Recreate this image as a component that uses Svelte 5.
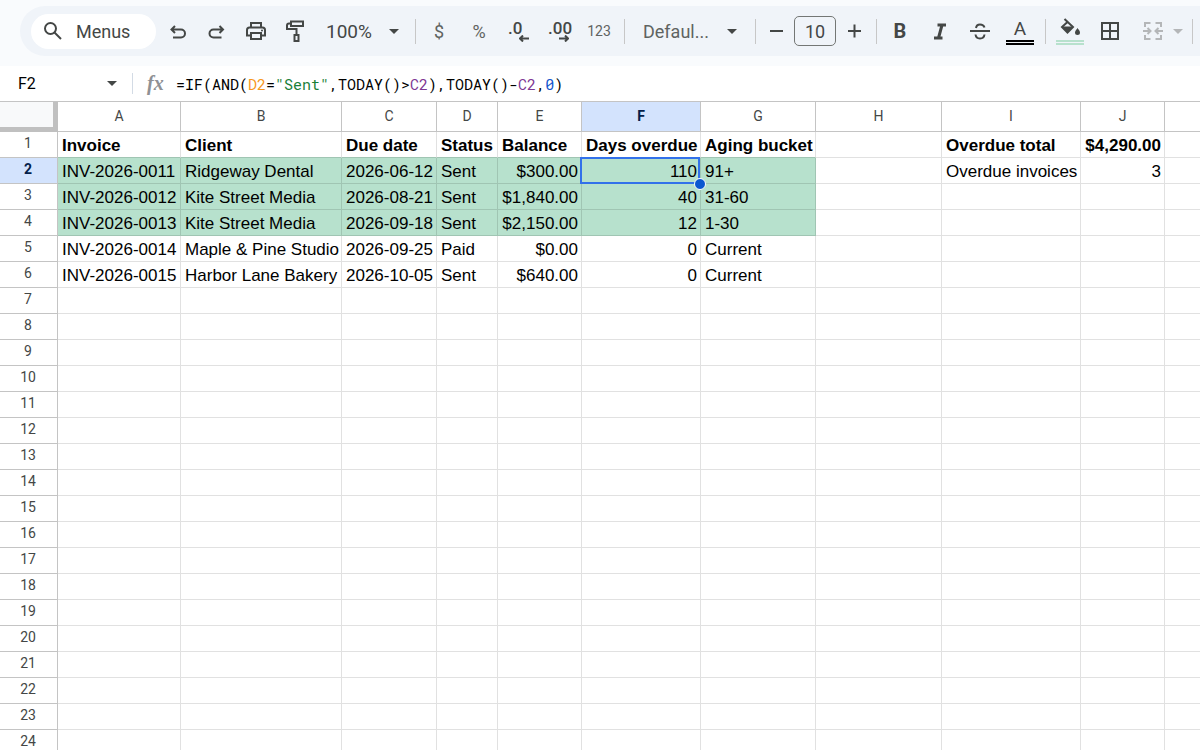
<script>
	const columns = [
		{ name: 'A', width: 123 },
		{ name: 'B', width: 161 },
		{ name: 'C', width: 95 },
		{ name: 'D', width: 61 },
		{ name: 'E', width: 84 },
		{ name: 'F', width: 119 },
		{ name: 'G', width: 115 },
		{ name: 'H', width: 126 },
		{ name: 'I', width: 139 },
		{ name: 'J', width: 84 },
		{ name: '' }
	];

	const data = [
		['Invoice', 'Client', 'Due date', 'Status', 'Balance', 'Days overdue', 'Aging bucket', '', 'Overdue total', '$4,290.00'],
		['INV-2026-0011', 'Ridgeway Dental', '2026-06-12', 'Sent', '$300.00', '110', '91+', '', 'Overdue invoices', '3'],
		['INV-2026-0012', 'Kite Street Media', '2026-08-21', 'Sent', '$1,840.00', '40', '31-60'],
		['INV-2026-0013', 'Kite Street Media', '2026-09-18', 'Sent', '$2,150.00', '12', '1-30'],
		['INV-2026-0014', 'Maple & Pine Studio', '2026-09-25', 'Paid', '$0.00', '0', 'Current'],
		['INV-2026-0015', 'Harbor Lane Bakery', '2026-10-05', 'Sent', '$640.00', '0', 'Current']
	];

	const formula = [
		['=IF(AND(', ''],
		['D2', 'orange'],
		['=', ''],
		['"Sent"', 'green'],
		[',TODAY()>', ''],
		['C2', 'purple'],
		['),TODAY()-', ''],
		['C2', 'purple'],
		[',', ''],
		['0', 'blue'],
		[')', '']
	];

	const rows = Array.from({ length: 24 }, (_, i) => data[i] || []);

	let nameBox = $state('F2');
	let fontSize = $state('10');
	let selected = $state({ row: 1, col: 5 });

	// invoice columns of rows that are past due
	const overdue = (r, c) => c < 7 && r > 0 && r < 4;
	const aboveOverdue = (r, c) => c < 7 && r === 0;
	const numeric = (r, c) => (r > 0 && (c === 4 || c === 5)) || c === 9;

	function select(row, col) {
		if (!columns[col].name) return;
		selected = { row, col };
		nameBox = columns[col].name + (row + 1);
	}

	function step(n) {
		fontSize = String(Math.max(1, Number(fontSize) + n));
	}
</script>

{#snippet caret()}
	<svg class="caret" viewBox="0 0 10 5" aria-hidden="true"><path d="M0 0h10L5 5z" /></svg>
{/snippet}

<div class="app">
	<header>
		<div class="toolbar" role="toolbar" aria-label="Main toolbar">
			<button class="menus">
				<svg class="icon" viewBox="0 0 24 24" aria-hidden="true">
					<circle cx="9.5" cy="9.5" r="5.5" class="line" />
					<path d="M13.5 13.5l6.5 6.5" class="line" />
				</svg>
				Menus
			</button>

			<div class="group history">
				<button class="tool" aria-label="Undo">
					<svg viewBox="0 0 20 20" aria-hidden="true"><path class="line" d="M7 5L3.500 8.500 7 12M3.500 8.500H13a4 4 0 0 1 0 8H5" /></svg>
				</button>
				<button class="tool" aria-label="Redo">
					<svg viewBox="0 0 20 20" aria-hidden="true"><path class="line" d="M12.500 5L16 8.500 12.500 12M16 8.500H6.500a4 4 0 0 0 0 8h8" /></svg>
				</button>
				<button class="tool" aria-label="Print">
					<svg viewBox="0 0 20 20" aria-hidden="true">
						<path class="line" d="M5 6.500V2h10v4.500M5 14.500H1V9q0-2.500 2.500-2.500h13Q19 6.500 19 9v5.500h-4M5 12h10v6H5z" />
						<circle cx="16" cy="9.500" r="1" />
					</svg>
				</button>
				<button class="tool" aria-label="Paint format">
					<svg class="tall" viewBox="0 0 20 22" aria-hidden="true"><path class="line" d="M6 1.500h12v4.500H6zM6 3.500H4Q2 3.500 2 5.500V9h9.500v6M9.500 15h4v6h-4z" /></svg>
				</button>
			</div>

			<div class="picker zoom">
				<select aria-label="Zoom"><option>100%</option></select>
				{@render caret()}
			</div>

			<span class="sep"></span>

			<div class="group">
				<button class="tool text" aria-label="Format as currency">$</button>
				<button class="tool text" aria-label="Format as percent">%</button>
				<button class="tool decimals" aria-label="Decrease decimal places">
					<span>.0</span>
					<svg viewBox="0 0 10 7" aria-hidden="true"><path class="line" d="M10 3.500H1.500M4 .5l-3 3 3 3" /></svg>
				</button>
				<button class="tool decimals" aria-label="Increase decimal places">
					<span>.00</span>
					<svg viewBox="0 0 10 7" aria-hidden="true"><path class="line" d="M0 3.500h8.500M6 .5l3 3-3 3" /></svg>
				</button>
				<button class="tool text small" aria-label="More formats">123</button>
			</div>

			<span class="sep"></span>

			<div class="picker font">
				<select aria-label="Font"><option>Defaul...</option></select>
				{@render caret()}
			</div>

			<span class="sep"></span>

			<div class="group">
				<button class="tool narrow" aria-label="Decrease font size" onclick={() => step(-1)}>
					<svg viewBox="0 0 20 20" aria-hidden="true"><path class="line" d="M4 10h13" /></svg>
				</button>
				<input class="size" aria-label="Font size" bind:value={fontSize} />
				<button class="tool narrow" aria-label="Increase font size" onclick={() => step(1)}>
					<svg viewBox="0 0 20 20" aria-hidden="true"><path class="line" d="M3 10h13M9.500 3.500v13" /></svg>
				</button>
			</div>

			<span class="sep"></span>

			<div class="group">
				<button class="tool bold" aria-label="Bold">B</button>
				<button class="tool" aria-label="Italic">
					<svg viewBox="0 0 20 20" aria-hidden="true"><path class="thick" d="M7.500 4H16M4 17h8.500M12 4L8.500 17" /></svg>
				</button>
				<button class="tool" aria-label="Strikethrough">
					<svg viewBox="0 0 20 20" aria-hidden="true"><path class="line" d="M0 10h20M6 7q.5-3.500 4-3.500t4.500 3M5.500 13.500q.5 4 4.500 4t4.500-4" /></svg>
				</button>
				<button class="tool swatch" aria-label="Text color">
					<span class="letter">A</span>
					<span class="bars"></span>
				</button>
			</div>

			<span class="sep"></span>

			<div class="group cell-tools">
				<button class="tool swatch fill" aria-label="Fill color">
					<svg viewBox="0 0 20 18" aria-hidden="true">
						<path class="line" d="M4.500 1l8.500 8-5.500 5.500L2 9 8 3.500" />
						<path d="M2 8.500h11L7.500 15zM17.500 10q-2.500 3-2.500 4.500a2.500 2.500 0 0 0 5 0q0-1.500-2.500-4.500z" />
					</svg>
					<span class="bars"></span>
				</button>
				<button class="tool" aria-label="Borders">
					<svg viewBox="0 0 20 20" aria-hidden="true"><path class="line" d="M2 2h16v16H2zM10 2v16M2 10h16" /></svg>
				</button>
			</div>
			<div class="group merge">
				<button class="tool" aria-label="Merge cells" disabled>
					<svg viewBox="0 0 20 20" aria-hidden="true"><path class="line" d="M7.500 2H2v4M2 14v4h5.500M12.500 2H18v4M18 14v4h-5.500M0 10h7M4.500 7l3 3-3 3M20 10h-7M15.500 7l-3 3 3 3" /></svg>
				</button>
				<button class="tool more" aria-label="Select merge type" disabled>{@render caret()}</button>
			</div>

			<span class="sep"></span>
		</div>
	</header>

	<div class="formula-bar">
		<div class="name-box">
			<input aria-label="Name box" bind:value={nameBox} />
			<button aria-label="Named ranges">{@render caret()}</button>
		</div>
		<span class="fx" aria-hidden="true">fx</span>
		<div class="formula" role="textbox" aria-label="Formula" tabindex="0" contenteditable="true" spellcheck="false">{#each formula as [text, color]}<span class={color}>{text}</span>{/each}</div>
	</div>

	<main>
		<table>
			<colgroup>
				<col class="numbers" />
				{#each columns as col}
					<col style:width={col.width ? col.width + 'px' : 'auto'} />
				{/each}
			</colgroup>
			<thead>
				<tr>
					<td class="corner"></td>
					{#each columns as col, c}
						<th scope="col" class:active={c === selected.col}>{col.name}</th>
					{/each}
				</tr>
			</thead>
			<tbody>
				{#each rows as row, r}
					<tr class:heading={r === 0}>
						<th scope="row" class:active={r === selected.row}>{r + 1}</th>
						{#each columns as col, c}
							<td
								class:overdue={overdue(r, c)}
								class:above={aboveOverdue(r, c)}
								class:numeric={numeric(r, c)}
								onclick={() => select(r, c)}
							>
								{row[c] || ''}
								{#if r === selected.row && c === selected.col}
									<span class="selection"></span>
									<span class="handle"></span>
								{/if}
							</td>
						{/each}
					</tr>
				{/each}
			</tbody>
		</table>
	</main>
</div>

<style>
	:global(body) {
		margin: 0;
		overflow: hidden;
		background: #fff;
	}

	.app {
		display: flex;
		flex-direction: column;
		height: 100vh;
		overflow: hidden;
		font-family: Roboto, 'Liberation Sans', sans-serif;
		color: #444746;
	}

	button,
	input,
	select {
		margin: 0;
		padding: 0;
		border: 0;
		background: none;
		font: inherit;
		color: inherit;
		outline: none;
	}

	svg {
		display: block;
		fill: currentColor;
	}

	.line,
	.thick {
		fill: none;
		stroke: currentColor;
		stroke-width: 2;
	}

	.thick {
		stroke-width: 3;
	}

	header {
		flex: none;
		padding: 6px 0 10px 20px;
		background: #f9fbfd;
	}

	.toolbar {
		display: flex;
		align-items: center;
		height: 50px;
		padding-left: 11px;
		border-radius: 25px 0 0 25px;
		background: #f0f4f9;
		overflow: hidden;
	}

	.toolbar > * {
		flex: none;
	}

	.menus {
		display: flex;
		align-items: center;
		gap: 11px;
		width: 125px;
		height: 35px;
		padding-left: 10px;
		border-radius: 18px;
		background: #fff;
		font-size: 18px;
	}

	.icon {
		width: 24px;
		height: 24px;
	}

	.group {
		display: flex;
		align-items: center;
		gap: 4px;
	}

	.history {
		gap: 3px;
		margin-left: 4px;
	}

	.tool {
		display: flex;
		align-items: center;
		justify-content: center;
		width: 36px;
		height: 36px;
	}

	.tool svg {
		width: 20px;
		height: 20px;
	}

	.tool svg.tall {
		height: 22px;
	}

	.text {
		font-size: 18px;
		color: #5f6361;
	}

	.small {
		font-size: 14px;
	}

	.narrow {
		width: 29px;
	}

	.bold {
		font-size: 20px;
		font-weight: 700;
	}

	.decimals {
		flex-direction: column;
		align-items: flex-start;
		box-sizing: border-box;
		padding-left: 7px;
		font-size: 17px;
		font-weight: 500;
		line-height: 14px;
	}

	.tool.decimals svg {
		align-self: flex-end;
		width: 10px;
		height: 7px;
		margin-right: 8px;
	}

	.picker {
		display: flex;
		align-items: center;
		padding: 0 9px 0 13px;
	}

	.picker select {
		flex: 1;
		min-width: 0;
		appearance: none;
		font-size: 19px;
	}

	.zoom {
		width: 73px;
	}

	.font {
		width: 94px;
		padding-right: 11px;
		color: #5f6361;
	}

	.font select {
		font-size: 18px;
	}

	.caret,
	.tool .caret {
		flex: none;
		width: 10px;
		height: 5px;
		color: #444746;
	}

	.sep {
		width: 1px;
		height: 25px;
		margin: 0 5px 0 7px;
		background: #c7c7c7;
	}

	.size {
		box-sizing: border-box;
		width: 42px;
		height: 30px;
		border: 1px solid #747775;
		border-radius: 5px;
		font-size: 18px;
		text-align: center;
	}

	.swatch {
		flex-direction: column;
		justify-content: flex-end;
		height: 28px;
	}

	.letter {
		font-size: 19px;
		line-height: 22px;
	}

	.bars {
		width: 28px;
		height: 1px;
		border: solid #000;
		border-width: 2px 0;
	}

	.cell-tools {
		margin-left: 1px;
	}

	.tool.fill svg {
		height: 18px;
		margin-bottom: 4px;
	}

	.fill .bars {
		border-color: #b7e1cd;
	}

	.merge {
		gap: 0;
		margin-left: 7px;
		color: #b4b6b8;
	}

	.merge button {
		color: inherit;
	}

	.more {
		width: 14px;
	}

	.tool.more .caret {
		color: inherit;
	}

	.formula-bar {
		display: flex;
		flex: none;
		align-items: center;
		height: 35px;
	}

	.name-box {
		display: flex;
		align-items: center;
		box-sizing: border-box;
		width: 133px;
		height: 21px;
		padding: 0 15px 0 18px;
		border-right: 1px solid #d3dbe5;
		color: #000;
		font-size: 16px;
	}

	.name-box input {
		flex: 1;
		min-width: 0;
	}

	.fx {
		width: 29px;
		margin-left: 14px;
		font: italic 700 20px 'Liberation Serif', serif;
		color: #8f9194;
	}

	.formula {
		flex: 1;
		font: 15px/20px 'Roboto Mono', 'Liberation Mono', monospace;
		color: #000;
		white-space: pre;
		outline: none;
	}

	.orange { color: #f7981d; }
	.green { color: #188038; }
	.purple { color: #7e3794; }
	.blue { color: #1155cc; }

	main {
		flex: 1;
		min-height: 0;
		overflow: hidden;
		border-top: 1px solid #c4c4c4;
	}

	table {
		width: 100%;
		min-width: 1166px;
		border-spacing: 0;
		table-layout: fixed;
	}

	.numbers {
		width: 58px;
	}

	th,
	td {
		box-sizing: border-box;
		height: 26px;
		padding: 0;
		border: solid #e1e1e1;
		border-width: 0 1px 1px 0;
		white-space: nowrap;
	}

	th {
		border-color: #c4c4c4;
		font-size: 14px;
		font-weight: 400;
		line-height: 16px;
		text-align: center;
	}

	thead th {
		height: 30px;
		padding-bottom: 2px;
	}

	tbody th {
		padding: 0 1px 3px 0;
	}

	th.active {
		background: #d3e3fd;
		color: #041e49;
		font-weight: 700;
	}

	.corner {
		border: solid #c0c0c0;
		border-width: 0 5px 5px 0;
		background: #f8f9fa;
	}

	tbody td {
		position: relative;
		padding: 2px 3px 0 4px;
		font: 17px/22px 'Liberation Sans', Arial, sans-serif;
		color: #000;
	}

	th:last-child,
	td:last-child {
		border-right: 0;
	}

	.heading td {
		font-weight: 700;
	}

	tbody .numeric {
		padding-right: 3px;
		padding-left: 0;
		text-align: right;
	}

	.overdue {
		border-color: #a0c5b3;
		background: #b7e1cd;
	}

	.above {
		border-bottom-color: #a0c5b3;
	}

	.selection {
		position: absolute;
		inset: -1px 0 -1px -2px;
		border: 2px solid #3271ea;
	}

	.handle {
		position: absolute;
		right: -6px;
		bottom: -7px;
		z-index: 1;
		width: 10px;
		height: 10px;
		border: 1px solid #fff;
		border-radius: 50%;
		background: #0b57d0;
	}
</style>
